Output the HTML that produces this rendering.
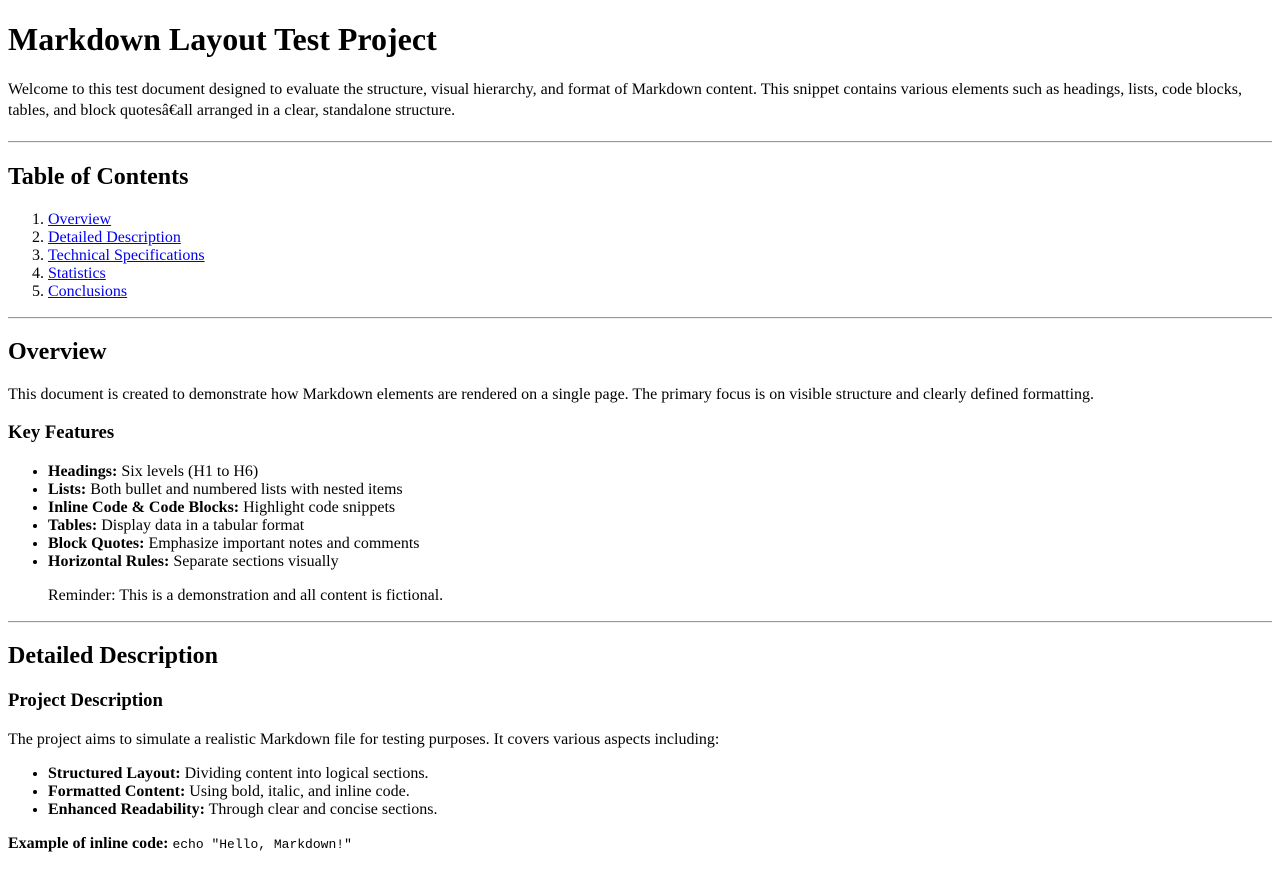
<!DOCTYPE html>
<html><head><meta charset="utf-8"><style>
body{margin:8px;font-family:"Liberation Serif",serif;font-size:16px;color:#000;background:#fff}
a{color:#0000ee}
code{font-family:"Liberation Mono",monospace;font-size:13px}
hr{border:none;border-top:1px solid #999;border-bottom:1px solid #eee;margin:8px 0}
p.intro{line-height:21px;margin-bottom:19px;position:relative;top:-1px}
h2.toc{margin-top:21px}
</style></head><body>
<h1>Markdown Layout Test Project</h1>
<p class="intro">Welcome to this test document designed to evaluate the structure, visual hierarchy, and format of Markdown content. This snippet contains various elements such as headings, lists, code blocks, tables, and block quotesâ€all arranged in a clear, standalone structure.</p>
<hr>
<h2 class="toc">Table of Contents</h2>
<ol>
<li><a href="#overview">Overview</a></li>
<li><a href="#detailed">Detailed Description</a></li>
<li><a href="#tech">Technical Specifications</a></li>
<li><a href="#stats">Statistics</a></li>
<li><a href="#concl">Conclusions</a></li>
</ol>
<hr>
<h2 id="overview">Overview</h2>
<p>This document is created to demonstrate how Markdown elements are rendered on a single page. The primary focus is on visible structure and clearly defined formatting.</p>
<h3>Key Features</h3>
<ul>
<li><strong>Headings:</strong> Six levels (H1 to H6)</li>
<li><strong>Lists:</strong> Both bullet and numbered lists with nested items</li>
<li><strong>Inline Code &amp; Code Blocks:</strong> Highlight code snippets</li>
<li><strong>Tables:</strong> Display data in a tabular format</li>
<li><strong>Block Quotes:</strong> Emphasize important notes and comments</li>
<li><strong>Horizontal Rules:</strong> Separate sections visually</li>
</ul>
<blockquote>Reminder: This is a demonstration and all content is fictional.</blockquote>
<hr>
<h2 id="detailed">Detailed Description</h2>
<h3>Project Description</h3>
<p>The project aims to simulate a realistic Markdown file for testing purposes. It covers various aspects including:</p>
<ul>
<li><strong>Structured Layout:</strong> Dividing content into logical sections.</li>
<li><strong>Formatted Content:</strong> Using bold, italic, and inline code.</li>
<li><strong>Enhanced Readability:</strong> Through clear and concise sections.</li>
</ul>
<p><strong>Example of inline code:</strong> <code>echo "Hello, Markdown!"</code></p>
</body></html>
